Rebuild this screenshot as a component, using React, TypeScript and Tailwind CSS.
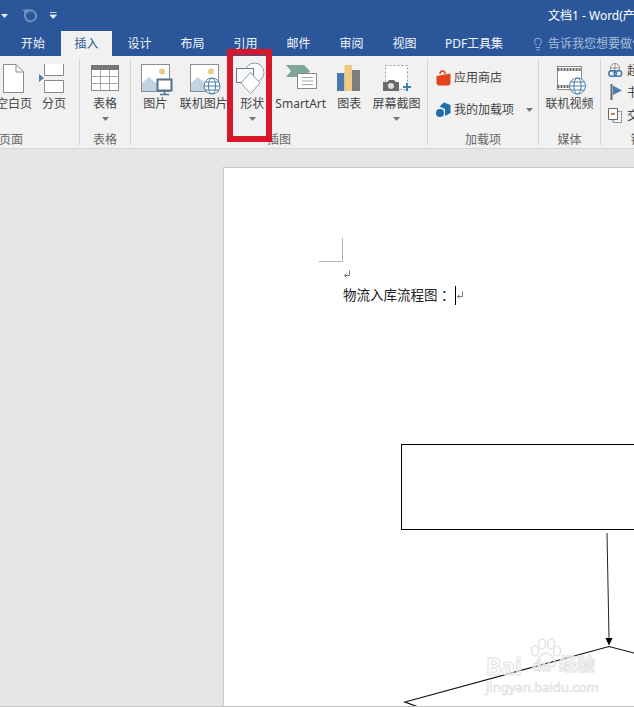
import * as React from "react"
import { Lightbulb } from "lucide-react"

const Globe = ({ cx, cy, r = 8 }: { cx: number; cy: number; r?: number }) => (
  <g fill="#fff" stroke="#4f7fa6" strokeWidth="1">
    <circle cx={cx} cy={cy} r={r} />
    <ellipse cx={cx} cy={cy} rx={r * 0.45} ry={r} fill="none" />
    <path d={`M${cx - r} ${cy}H${cx + r}M${cx - r + 1} ${cy - r * 0.5}H${cx + r - 1}M${cx - r + 1} ${cy + r * 0.5}H${cx + r - 1}`} fill="none" />
  </g>
)

const Picture = () => (
  <g>
    <rect x="4.5" y="1.5" width="28" height="27" fill="#fff" stroke="#8c8c8c" />
    <circle cx="25" cy="8.5" r="3" fill="#edc98a" />
    <path d="M5 28V20L12 14L20 21L24 18L32 26V28Z" fill="#c3d3e4" />
  </g>
)

const Icon = ({ children }: { children: React.ReactNode }) => (
  <svg width="36" height="33" viewBox="0 0 36 33" className="shrink-0 overflow-visible">
    {children}
  </svg>
)

const BlankPage = () => (
  <Icon>
    <path d="M7.5 1.5H20L27.5 9V29.5H7.5Z" fill="#fff" stroke="#8a8a8a" />
    <path d="M20 1.5V9H27.5" fill="none" stroke="#8a8a8a" />
  </Icon>
)

const PageBreak = () => (
  <Icon>
    <path d="M8.5 1V12.5H27.5V1" fill="#fff" stroke="#8a8a8a" />
    <path d="M8.5 29.5V17.5H27.5V29.5Z" fill="#fff" stroke="#8a8a8a" />
    <path d="M3 11L8 15L3 19Z" fill="#4f7fa6" />
  </Icon>
)

const TableIcon = () => (
  <Icon>
    <rect x="4.5" y="2.5" width="27" height="25" fill="#fff" stroke="#8a8a8a" />
    <rect x="4" y="2" width="28" height="5" fill="#777" />
    <path d="M4.5 13.5H31.5M4.5 20.5H31.5M13.5 7V27M22.5 7V27" stroke="#a5a5a5" fill="none" />
  </Icon>
)

const PictureIcon = () => (
  <Icon>
    <Picture />
    <rect x="20.5" y="16.5" width="14" height="11" fill="#fff" stroke="#4f7391" strokeWidth="2" />
    <path d="M27.5 28V31M23 31.5H32" stroke="#4f7391" strokeWidth="1.5" />
  </Icon>
)

const OnlinePictureIcon = () => (
  <Icon>
    <Picture />
    <Globe cx={26} cy={23} />
  </Icon>
)

const ShapesIcon = () => (
  <Icon>
    <circle cx="20.5" cy="9.5" r="9.5" fill="#fff" stroke="#8d99a6" />
    <rect x="2.5" y="5.5" width="17" height="14" fill="#f6f8fb" stroke="#6b7785" />
    <path d="M16.5 9.5L26 20L16.5 30.5L7 20Z" fill="#fff" stroke="#8d99a6" />
  </Icon>
)

const SmartArtIcon = () => (
  <Icon>
    <path d="M3 2H21L27 8L22 14H3L8 8Z" fill="#7fa798" />
    <rect x="14.5" y="10.5" width="19" height="15" fill="#fff" stroke="#8a8a8a" />
    <path d="M19 14.5H30M19 18H30M19 21.5H30" stroke="#a5a5a5" fill="none" />
  </Icon>
)

const ChartIcon = () => (
  <Icon>
    <rect x="6" y="10" width="7.5" height="18" fill="#4c79ad" />
    <rect x="13.5" y="2" width="7.5" height="26" fill="#efca85" />
    <rect x="21" y="7" width="8" height="21" fill="#7d7d7d" />
  </Icon>
)

const ScreenshotIcon = () => (
  <Icon>
    <rect x="6.5" y="2.5" width="22" height="24" fill="#fff" stroke="#9a9a9a" strokeDasharray="2 2" />
    <path d="M4 19H8L10 17H15L17 19H20V28H4Z" fill="#6a6a6a" />
    <circle cx="12" cy="23" r="3" fill="#ddd" />
    <path d="M28 20V28M24 24H32" stroke="#3d7fb5" strokeWidth="2" />
  </Icon>
)

const VideoIcon = () => (
  <Icon>
    <rect x="5.5" y="3.5" width="24" height="23" fill="#fff" stroke="#8a8a8a" />
    <path d="M5.5 6.5H29.5M5.5 23.5H29.5" stroke="#6a6a6a" strokeWidth="3" strokeDasharray="2 1" />
    <Globe cx={25.5} cy={23} />
  </Icon>
)

const Caret = () => (
  <svg width="7" height="4" viewBox="0 0 7 4" className="shrink-0">
    <path d="M0 0H7L3.5 4Z" fill="#777" />
  </svg>
)

const BigButton = ({ icon, label, caret, width }: { icon: React.ReactNode; label: string; caret?: boolean; width: string }) => (
  <div className={`flex flex-col items-center pt-[3px] ${width}`}>
    {icon}
    <span className="whitespace-nowrap leading-[14px] mt-[1px]">{label}</span>
    {caret && <div className="mt-[6px] flex"><Caret /></div>}
  </div>
)

const Group = ({ label, width, children, last }: { label: string; width: string; children: React.ReactNode; last?: boolean }) => (
  <div className={`flex flex-col shrink-0 h-[85px] ${width} ${last ? "" : "border-r border-[#d4d4d4]"}`}>
    <div className="flex-1 flex min-h-0">{children}</div>
    <div className="h-[16px] -mb-[3px] leading-[16px] text-center text-[#666]">{label}</div>
  </div>
)

const StoreIcon = () => (
  <svg width="15" height="16" viewBox="0 0 15 16" className="shrink-0">
    <path d="M4 4C4 0 9 0 9 4" fill="none" stroke="#d9441c" strokeWidth="1.5" />
    <path d="M0.5 6L14.5 3.5V13C14.5 14.5 13.5 15.5 12 15.5H3C1.5 15.5 0.5 14.5 0.5 13Z" fill="#e5431a" />
  </svg>
)

const AddinIcon = () => (
  <svg width="15" height="16" viewBox="0 0 15 16" className="shrink-0">
    <path d="M8 0.5L14.5 3V11L9 14V7L3.5 4.5Z" fill="#1f6fa8" />
    <circle cx="4" cy="11" r="4" fill="#1f6fa8" />
  </svg>
)

const LinkIcon = () => (
  <svg width="15" height="16" viewBox="0 0 15 16" className="shrink-0">
    <circle cx="7" cy="5" r="4.5" fill="#fff" stroke="#8a8a8a" />
    <path d="M2.5 5H11.5M7 0.5V9" stroke="#8a8a8a" fill="none" />
    <rect x="0.8" y="7.8" width="7.5" height="5.5" rx="2.7" fill="none" stroke="#3d78ad" strokeWidth="1.5" />
    <rect x="6.2" y="7.8" width="7.5" height="5.5" rx="2.7" fill="none" stroke="#3d78ad" strokeWidth="1.5" />
  </svg>
)

const FlagIcon = () => (
  <svg width="15" height="17" viewBox="0 0 15 17" className="shrink-0">
    <path d="M3.5 0V16" stroke="#667" strokeWidth="2" />
    <path d="M5 1.5L14 6.5L5 11Z" fill="#4f7fa6" />
  </svg>
)

const CrossRefIcon = () => (
  <svg width="15" height="15" viewBox="0 0 15 15" className="shrink-0">
    <path d="M0.5 0.5H9.5V11.5H0.5Z" fill="#fff" stroke="#666" />
    <path d="M9.5 3.5H13.5V14.5H5V11.5" fill="none" stroke="#666" strokeDasharray="2 1" />
    <path d="M3 6H7" stroke="#c0561d" strokeWidth="1.5" />
  </svg>
)

const ReturnMark = () => (
  <svg width="8" height="9" viewBox="0 0 8 9" className="shrink-0">
    <path d="M6.5 0.5V5.5H1.5M3.5 3.5L1.5 5.5L3.5 7.5" fill="none" stroke="#777" />
  </svg>
)

const tabs = ["设计", "布局", "引用", "邮件", "审阅", "视图"]

export default function App() {
  return (
    <div
      className="relative flex flex-col w-[634px] h-[707px] overflow-hidden bg-[#e6e6e6] text-[12px] text-[#444]"
      style={{ fontFamily: '"Noto Sans", "Noto Sans CJK SC", sans-serif' }}
    >
      {/* Title bar */}
      <header className="flex items-center h-[31px] shrink-0 bg-[#2b579a] text-white">
        <svg width="8" height="6" viewBox="0 0 8 6" className="ml-[1px] shrink-0">
          <path d="M0 1H7L3.5 5Z" fill="#e8eef7" />
        </svg>
        <svg width="16" height="16" viewBox="0 0 16 16" className="ml-[12px] shrink-0">
          <path d="M4 3.5V8A5.5 5.5 0 1 0 7 3" fill="none" stroke="#6e8fc0" strokeWidth="2" />
          <path d="M1 2L8 1L7 6Z" fill="#6e8fc0" />
        </svg>
        <svg width="7" height="7" viewBox="0 0 7 7" className="ml-[13px] shrink-0">
          <path d="M0 0.5H6.5M0 3H6.5L3.2 6.5Z" fill="#e8eef7" stroke="#e8eef7" strokeWidth="0.8" />
        </svg>
        <span className="ml-[491px] whitespace-nowrap">文档1 - Word(产品激活失败)</span>
      </header>

      {/* Tabs */}
      <nav className="flex items-stretch h-[25px] shrink-0 pl-[8px] bg-[#2b579a] text-[#f2f5fa]">
        <div className="w-[51px] mr-[2px] shrink-0 flex items-center justify-center pr-[1px]">开始</div>
        <div className="w-[51px] mr-[2px] shrink-0 flex items-center justify-center bg-[#f1f1f1] text-[#2b579a]">插入</div>
        {tabs.map((tab) => (
          <div key={tab} className="w-[51px] mr-[2px] shrink-0 flex items-center justify-center">
            {tab}
          </div>
        ))}
        <div className="w-[84px] shrink-0 flex items-center justify-center">PDF工具集</div>
        <div className="ml-[15px] flex items-center gap-[3px] whitespace-nowrap text-[#a9bddb]">
          <Lightbulb className="w-[14px] h-[14px] shrink-0" strokeWidth={1.5} />
          告诉我您想要做什么
        </div>
      </nav>

      {/* Ribbon */}
      <section className="flex h-[93px] shrink-0 pt-[4px] bg-[#f1f1f1] border-b border-[#d6d6d6]">
        <div className="flex shrink-0 -ml-[57px]">
          <Group label="页面" width="w-[137px]">
            <div className="flex flex-1 justify-end pr-[9px]">
              <BigButton icon={<BlankPage />} label="空白页" width="w-[48px]" />
              <BigButton icon={<PageBreak />} label="分页" width="w-[32px]" />
            </div>
          </Group>
        </div>
        <Group label="表格" width="w-[51px]">
          <BigButton icon={<TableIcon />} label="表格" caret width="w-full" />
        </Group>
        <Group label="插图" width="w-[297px]">
          <BigButton icon={<PictureIcon />} label="图片" width="w-[48.5px]" />
          <BigButton icon={<OnlinePictureIcon />} label="联机图片" width="w-[48.5px]" />
          <BigButton icon={<ShapesIcon />} label="形状" caret width="w-[48.5px]" />
          <BigButton icon={<SmartArtIcon />} label="SmartArt" width="w-[48.5px]" />
          <BigButton icon={<ChartIcon />} label="图表" width="w-[48.5px]" />
          <BigButton icon={<ScreenshotIcon />} label="屏幕截图" caret width="w-[46px]" />
        </Group>
        <Group label="加载项" width="w-[111px]">
          <div className="flex flex-col pl-[8px] pt-[10px] gap-[16px] w-full">
            <div className="flex items-center gap-[3px] h-[16px]">
              <StoreIcon />
              <span>应用商店</span>
            </div>
            <div className="flex items-center gap-[3px] h-[16px]">
              <AddinIcon />
              <span>我的加载项</span>
              <div className="ml-[9px] flex"><Caret /></div>
            </div>
          </div>
        </Group>
        <Group label="媒体" width="w-[62px]">
          <BigButton icon={<VideoIcon />} label="联机视频" width="w-full" />
        </Group>
        <Group label="链接" width="w-[84px]" last>
          <div className="flex flex-col pl-[7px] pt-[3px] gap-[5px] w-full">
            <div className="flex items-center gap-[4px] h-[16px]"><LinkIcon /><span>超链接</span></div>
            <div className="flex items-center gap-[4px] h-[17px]"><FlagIcon /><span>书签</span></div>
            <div className="flex items-center gap-[4px] h-[15px] mt-[2px]"><CrossRefIcon /><span>交叉引用</span></div>
          </div>
        </Group>
      </section>

      {/* Document area */}
      <main className="flex-1 min-h-0 pl-[223px] pt-[18px] overflow-hidden">
        <div className="w-[500px] h-[600px] bg-white border-l border-t border-[#c8c8c8] pl-[119px] pt-[70px] text-[13.5px] text-[#222]">
          <div className="-ml-[24px] w-[24px] h-[24px] border-r border-b border-[#b4b4b4]" />
          <div className="mt-[8px] h-[9px] flex"><ReturnMark /></div>
          <div className="mt-[7px] h-[19px] flex items-center whitespace-nowrap leading-[19px]">
            物流入库流程图
            <span className="font-['Noto_Sans_CJK_TC']">：</span>
            <span className="ml-[4px] w-[1px] h-[19px] bg-black" />
            <ReturnMark />
          </div>
          <div className="mt-[139px] ml-[58px] w-[300px] h-[86px] border border-black" />
          <svg width="244" height="180" viewBox="390 530 244 180" className="ml-[47px] block">
            <path d="M607 533L609 638" stroke="#222" fill="none" />
            <path d="M605.5 638H612.5L609 645.5Z" fill="#000" />
            <path d="M634 653L609 646.5L405 702L421 708" stroke="#111" strokeWidth="1.2" fill="none" />
          </svg>
        </div>
      </main>
      <div className="h-[1px] shrink-0 bg-[#c2c2c2]" />

      {/* Red highlight */}
      <div className="absolute left-[227px] top-[49px] w-[45px] h-[93px] border-[6px] border-[#d8172a]" />

      {/* Watermark */}
      <div className="absolute left-[486px] top-[638px] w-[112px] h-[56px]">
        <svg width="34" height="30" viewBox="0 0 34 30" className="absolute left-[42px] top-0">
          <g fill="none" stroke="#e2e2e2" strokeWidth="1.5">
            <ellipse cx="7" cy="13" rx="3.5" ry="5" />
            <ellipse cx="14" cy="6" rx="3.5" ry="5" />
            <ellipse cx="23" cy="6" rx="3.5" ry="5" />
            <ellipse cx="29" cy="13" rx="3.5" ry="5" />
            <path d="M9 26C9 20 14 15 18 15C22 15 27 20 27 26C27 29 21 29 18 28C15 29 9 29 9 26Z" />
          </g>
        </svg>
        <span className="absolute left-0 top-[16px] text-[23px] leading-[24px] font-bold text-white/60 [-webkit-text-stroke:1px_#e2e2e2]">Bai</span>
        <span className="absolute left-[46px] top-[17px] text-[15px] leading-[20px] font-bold text-white/60 [-webkit-text-stroke:1px_#e2e2e2]">du</span>
        <span className="absolute left-[73px] top-[15px] text-[18px] leading-[22px] font-bold text-white/60 [-webkit-text-stroke:1px_#e2e2e2]">经验</span>
        <span className="absolute left-0 top-[42px] text-[13px] leading-[14px] whitespace-nowrap text-white/60 [-webkit-text-stroke:0.7px_#dedede]">jingyan.baidu.com</span>
      </div>
    </div>
  )
}
